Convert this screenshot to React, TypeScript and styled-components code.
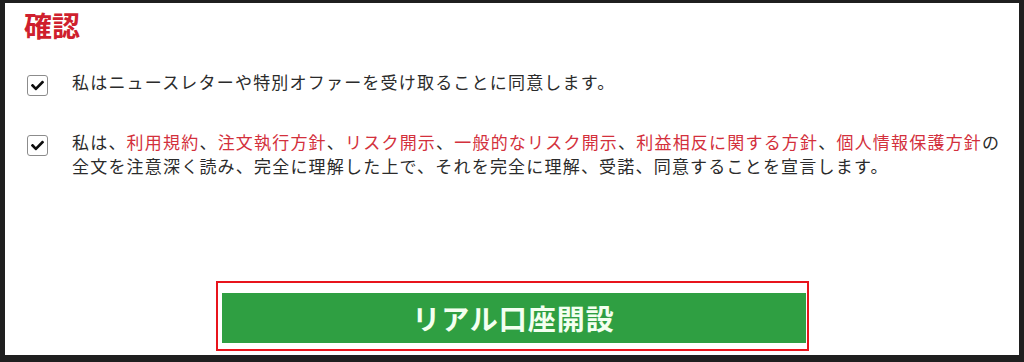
import React from 'react'
import styled, { createGlobalStyle } from 'styled-components'
import { FaCheck } from 'react-icons/fa'

const GlobalStyle = createGlobalStyle`
  html, body {
    margin: 0;
    padding: 0;
    background: #1f1f1f;
  }
  body {
    font-family: "Noto Sans CJK JP", "Noto Sans", sans-serif;
  }
`

const docs = [
  '利用規約',
  '注文執行方針',
  'リスク開示',
  '一般的なリスク開示',
  '利益相反に関する方針',
  '個人情報保護方針',
]

function App() {
  return (
    <>
      <GlobalStyle />
      <Frame>
        <Title>確認</Title>
        <Agreements>
          <Row>
            <CheckBox>
              <FaCheck />
            </CheckBox>
            <Label>私はニュースレターや特別オファーを受け取ることに同意します。</Label>
          </Row>
          <Row>
            <CheckBox>
              <FaCheck />
            </CheckBox>
            <Label>
              私は、
              {docs.map((d, i) => (
                <React.Fragment key={d}>
                  <DocLink>{d}</DocLink>
                  {i < docs.length - 1 ? '、' : 'の'}
                </React.Fragment>
              ))}
              <br />
              全文を注意深く読み、完全に理解した上で、それを完全に理解、受諾、同意することを宣言します。
            </Label>
          </Row>
        </Agreements>
        <Highlight>
          <SubmitButton>リアル口座開設</SubmitButton>
        </Highlight>
      </Frame>
    </>
  )
}

const Frame = styled.div`
  height: 362px;
  box-sizing: border-box;
  border-style: solid;
  border-color: #1f1f1f;
  border-width: 3px 5px 7px 5px;
  background: #ffffff;
  padding: 8px 0 0 19px;
  display: flex;
  flex-direction: column;
`

const Title = styled.h2`
  margin: 0;
  font-size: 28px;
  line-height: 28px;
  font-weight: 700;
  color: #cf1f2e;
`

const Agreements = styled.div`
  display: flex;
  flex-direction: column;
  gap: 34px;
  margin-top: 31px;
  padding-left: 3px;
`

const Row = styled.div`
  display: grid;
  grid-template-columns: 21px 1fr;
  column-gap: 24px;
  align-items: start;
`

const CheckBox = styled.span`
  width: 21px;
  height: 21px;
  margin-top: 5px;
  box-sizing: border-box;
  border: 1px solid #8c8c8c;
  border-radius: 3px;
  background: #fff;
  display: flex;
  align-items: center;
  justify-content: center;
  color: #0d0d0d;
  font-size: 13px;
`

const Label = styled.p`
  margin: 0;
  font-size: 17px;
  line-height: 24px;
  letter-spacing: 1.2px;
  color: #2b2b2b;
  white-space: nowrap;
`

const DocLink = styled.span`
  color: #d3303c;
`

const Highlight = styled.div`
  align-self: center;
  margin: auto 0 4px -19px;
  width: 593px;
  box-sizing: border-box;
  border: 2px solid #e8141c;
  padding: 10px 1px 6px 4px;
`

const SubmitButton = styled.button`
  display: flex;
  align-items: center;
  justify-content: center;
  width: 100%;
  height: 50px;
  border: none;
  background: #2f9f42;
  color: #f3fff0;
  font-family: "Noto Sans CJK JP", "Noto Sans", sans-serif;
  font-size: 28px;
  font-weight: 700;
  letter-spacing: 1px;
  cursor: pointer;
`

export default App
